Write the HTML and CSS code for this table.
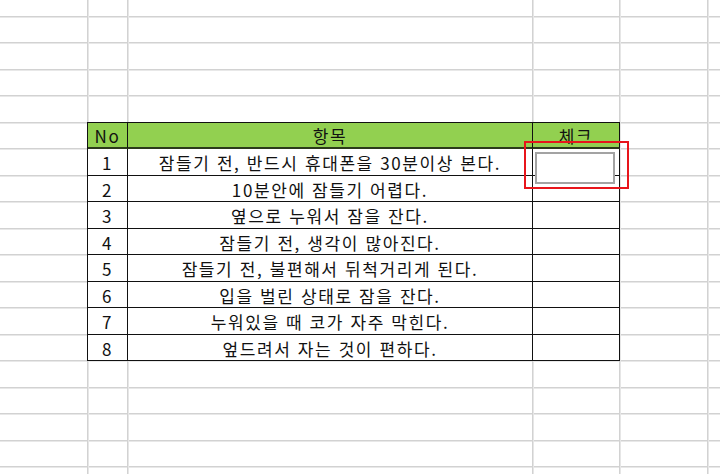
FILE: index.html
```html
<!DOCTYPE html>
<html lang="ko">
<head>
<meta charset="utf-8">
<link rel="stylesheet" href="styles.css">
</head>
<body>
<div class="sheet">
  <div class="tbl">
    <div class="cell head">No</div>
    <div class="cell head">항목</div>
    <div class="cell head">체크</div>

    <div class="cell tall">1</div>
    <div class="cell tall">잠들기 전, 반드시 휴대폰을 30분이상 본다.</div>
    <div class="cell tall"></div>

    <div class="cell">2</div>
    <div class="cell">10분안에 잠들기 어렵다.</div>
    <div class="cell"></div>

    <div class="cell tall">3</div>
    <div class="cell tall">옆으로 누워서 잠을 잔다.</div>
    <div class="cell tall"></div>

    <div class="cell">4</div>
    <div class="cell">잠들기 전, 생각이 많아진다.</div>
    <div class="cell"></div>

    <div class="cell tall">5</div>
    <div class="cell tall">잠들기 전, 불편해서 뒤척거리게 된다.</div>
    <div class="cell tall"></div>

    <div class="cell">6</div>
    <div class="cell">입을 벌린 상태로 잠을 잔다.</div>
    <div class="cell"></div>

    <div class="cell tall">7</div>
    <div class="cell tall">누워있을 때 코가 자주 막힌다.</div>
    <div class="cell tall"></div>

    <div class="cell">8</div>
    <div class="cell">엎드려서 자는 것이 편하다.</div>
    <div class="cell"></div>

    <div class="textbox"></div>
    <div class="highlight"></div>
  </div>
</div>
</body>
</html>
```

FILE: styles.css
```css
html, body {
  margin: 0;
  padding: 0;
  background: #fff;
}

.sheet {
  width: 720px;
  height: 474px;
  overflow: hidden;
  padding-top: 122px;
  padding-left: 87px;
  box-sizing: border-box;
  background-image:
    linear-gradient(to right, #d2d2d2 0 1px, #e6e6e6 1px 2px),
    linear-gradient(to right, #d2d2d2 0 1px, #e6e6e6 1px 2px),
    linear-gradient(to right, #d2d2d2 0 1px, #e6e6e6 1px 2px),
    linear-gradient(to right, #d2d2d2 0 1px, #e6e6e6 1px 2px),
    linear-gradient(to right, #d2d2d2 0 1px, #e6e6e6 1px 2px),
    repeating-linear-gradient(to bottom,
      #d2d2d2 0 1px,
      #e8e8e8 1px 2px,
      transparent 2px 26px,
      #d2d2d2 26px 27px,
      #e8e8e8 27px 28px,
      transparent 28px 53px);
  background-size:
    2px 100%, 2px 100%, 2px 100%, 2px 100%, 2px 100%,
    100% 53px;
  background-position:
    87px 0, 127px 0, 532px 0, 619px 0, 707px 0,
    0 16px;
  background-repeat:
    no-repeat, no-repeat, no-repeat, no-repeat, no-repeat,
    repeat;
}

.tbl {
  position: relative;
  display: grid;
  grid-template-columns: 40px 405px 87px;
  width: 533px;
  border-left: 1px solid #111;
  border-top: 1px solid #111;
  box-sizing: border-box;
  font-family: "Noto Sans CJK KR", "Noto Sans", sans-serif;
  font-size: 17px;
  letter-spacing: 1.6px;
  color: #111;
  background: #fff;
}

.cell {
  height: 26px;
  box-sizing: border-box;
  border-right: 1px solid #111;
  border-bottom: 1px solid #111;
  display: flex;
  align-items: center;
  justify-content: center;
  white-space: nowrap;
  line-height: 1;
  padding-top: 1px;
}

.cell.tall {
  height: 27px;
}

.cell.head {
  height: 26px;
  background: #92d050;
  border-bottom: 2px solid #2b3a1a;
}

.textbox {
  position: absolute;
  left: 447px;
  top: 29px;
  width: 80px;
  height: 32px;
  box-sizing: border-box;
  border: 2px solid #a3a3a3;
  background: #fff;
}

.highlight {
  position: absolute;
  left: 436px;
  top: 18px;
  width: 105px;
  height: 48px;
  box-sizing: border-box;
  border: 2px solid #e8151b;
}
```
